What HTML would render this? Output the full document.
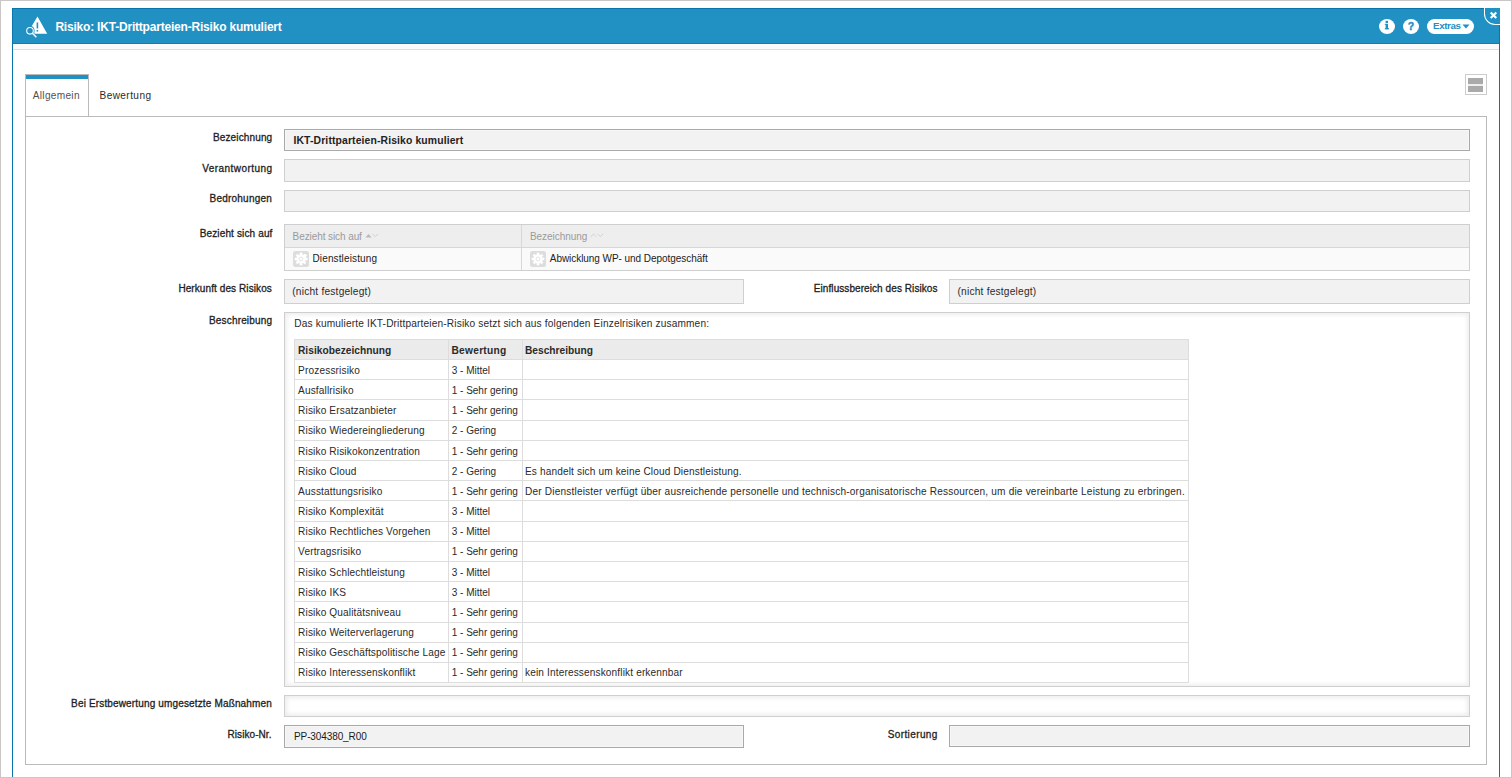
<!DOCTYPE html>
<html><head><meta charset="utf-8"><style>
html,body{margin:0;padding:0;width:1512px;height:778px;overflow:hidden;background:#fff;position:relative}
div{box-sizing:border-box}
.a{position:absolute}
.t{position:absolute;white-space:nowrap;line-height:normal;font-family:'Liberation Sans', sans-serif}
</style></head><body>
<!-- outer frame -->
<div class="a" style="left:12px;top:8px;width:1488px;height:770px;border:1px solid #0a75aa;border-bottom:none;background:#fff"></div>
<!-- header -->
<div class="a" style="left:12px;top:8px;width:1488px;height:36px;background:#2190c3;border:1px solid #0a75aa;border-bottom-color:#0e7db4"></div>
<div class="a" style="left:13px;top:45px;width:1486px;height:4px;background:#fafafa"></div>
<div class="a" style="left:13px;top:49px;width:1486px;height:1px;background:#dedede"></div>
<!-- close button -->
<div class="a" style="left:1484px;top:8px;width:16px;height:17px;background:#2190c3;border-left:1px solid #fff;border-bottom:1px solid #fff;border-bottom-left-radius:11px"></div>
<svg class="a" style="left:1489px;top:11px" width="9" height="9" viewBox="0 0 9 9"><path d="M2.5 2.3 L6.5 6.3 M6.5 2.3 L2.5 6.3" stroke="#fff" stroke-width="2.2" stroke-linecap="square"/></svg>
<!-- header icon -->
<svg class="a" style="left:24px;top:14px" width="28" height="26" viewBox="0 0 28 26">
 <path d="M13.5 2.5 L23.2 19.7 L10.5 19.7 L10 17.5 A5 5 0 0 0 7.8 12 Z" fill="#fff"/>
 <rect x="12.6" y="8.5" width="1.6" height="6" fill="#2190c3"/>
 <rect x="12.6" y="16" width="1.6" height="1.6" fill="#2190c3"/>
 <circle cx="6" cy="16.8" r="3.3" fill="none" stroke="#2190c3" stroke-width="2.6"/>
 <circle cx="6" cy="16.8" r="3.3" fill="none" stroke="#fff" stroke-width="1.1"/>
 <path d="M8.6 19.4 L12.4 23.2" stroke="#fff" stroke-width="1.4"/>
</svg>
<!-- info / help / extras -->
<div class="a" style="left:1379px;top:19px;width:16px;height:15px;border-radius:50%;background:#fff"></div>
<div class="a" style="left:1403px;top:19px;width:16px;height:15px;border-radius:50%;background:#fff"></div>
<div class="a" style="left:1427px;top:19px;width:47px;height:15px;border-radius:7.5px;background:#fff"></div>
<svg class="a" style="left:1384px;top:20px" width="6" height="10" viewBox="0 0 6 10"><rect x="1.6" y="0.8" width="2.4" height="2.2" fill="#2190c3"/><rect x="1.6" y="3.8" width="2.4" height="5.4" fill="#2190c3"/><rect x="0.8" y="3.8" width="1" height="1.1" fill="#2190c3"/><rect x="0.8" y="8.2" width="4.2" height="1.1" fill="#2190c3"/></svg>
<div class="t" style="left:1407px;top:19.5px;width:8px;text-align:center;font-size:10.5px;font-weight:700;color:#2190c3;-webkit-text-stroke:0.4px #2190c3">?</div>
<div class="t" style="left:1433px;top:20px;font-size:9.8px;font-weight:700;color:#2190c3;letter-spacing:-0.4px">Extras</div>
<svg class="a" style="left:1462px;top:24px" width="8" height="5" viewBox="0 0 8 5"><path d="M0.5 0.5 L7.5 0.5 L4 4.5 Z" fill="#2190c3"/></svg>
<!-- tabs -->
<div class="a" style="left:25px;top:74px;width:64px;height:43px;border:1px solid #bababa;border-bottom:none;background:#fff"></div>
<div class="a" style="left:26px;top:75px;width:62px;height:4px;background:#2190c3"></div>
<div class="a" style="left:25px;top:116px;width:1462px;height:649px;border:1px solid #bababa"></div>
<!-- layout icon -->
<div class="a" style="left:1465px;top:74px;width:22px;height:21px;border:1px solid #cccccc;background:#fff"></div>
<div class="a" style="left:1468px;top:78px;width:15px;height:6px;background:#aaaaaa"></div>
<div class="a" style="left:1468px;top:84px;width:15px;height:2px;background:#eeeeee"></div>
<div class="a" style="left:1468px;top:86px;width:15px;height:6px;background:#aaaaaa"></div>
<!-- fields -->
<div class="a" style="left:284px;top:129px;width:1186px;height:22px;border:1px solid #a9a9a9;background:#f2f2f2;box-shadow:inset 0 0 0 1px #f7f7f7"></div>
<div class="a" style="left:284px;top:159px;width:1186px;height:23px;border:1px solid #cfcfcf;background:#f2f2f2"></div>
<div class="a" style="left:284px;top:190px;width:1186px;height:22px;border:1px solid #cfcfcf;background:#f2f2f2"></div>
<!-- bezieht sich auf table -->
<div class="a" style="left:284px;top:224px;width:1186px;height:47px;border:1px solid #cfcfcf;background:#fafafa"></div>
<div class="a" style="left:285px;top:225px;width:1184px;height:22px;background:#eeeeee"></div>
<div class="a" style="left:285px;top:247px;width:1184px;height:1px;background:#d7d7d7"></div>
<div class="a" style="left:521px;top:225px;width:1px;height:45px;background:#d7d7d7"></div>
<svg class="a" style="left:365px;top:233px" width="14" height="6" viewBox="0 0 14 6"><path d="M0.3 4.6 L3.5 1 L6.7 4.6 Z" fill="#bbbbbb"/><path d="M7.5 0.8 L10.3 3.6 L13.1 0.8" fill="none" stroke="#cccccc" stroke-width="0.9"/></svg>
<svg class="a" style="left:590px;top:233px" width="14" height="6" viewBox="0 0 14 6"><path d="M0.7 3.8 L3.5 1 L6.3 3.8" fill="none" stroke="#cccccc" stroke-width="0.9"/><path d="M7.5 0.8 L10.3 3.6 L13.1 0.8" fill="none" stroke="#cccccc" stroke-width="0.9"/></svg>
<!-- gears -->
<svg class="a" style="left:293px;top:251px" width="16" height="16" viewBox="0 0 16 16"><rect x="0" y="0" width="16" height="16" rx="2.5" fill="#dddddd"/><g transform="translate(8,8)" fill="#fff"><path id="g" d="M-1.2 -6.2 L1.2 -6.2 L1.5 -4.3 L3.3 -3.6 L4.6 -5 L6.2 -3.4 L4.8 -2 L5.2 -0.9 L6.3 -0.9 L6.3 1.2 Z"/></g><circle cx="8" cy="8" r="4.6" fill="#fff"/><g transform="translate(8,8)" fill="#fff"><rect x="-1.3" y="-6.3" width="2.6" height="12.6"/><rect x="-6.3" y="-1.3" width="12.6" height="2.6"/><rect x="-1.3" y="-6.3" width="2.6" height="12.6" transform="rotate(45)"/><rect x="-1.3" y="-6.3" width="2.6" height="12.6" transform="rotate(-45)"/></g><circle cx="8" cy="8" r="1.9" fill="none" stroke="#e6e6e6" stroke-width="1"/></svg>
<svg class="a" style="left:530px;top:251px" width="16" height="16" viewBox="0 0 16 16"><rect x="0" y="0" width="16" height="16" rx="2.5" fill="#dddddd"/><circle cx="8" cy="8" r="4.6" fill="#fff"/><g transform="translate(8,8)" fill="#fff"><rect x="-1.3" y="-6.3" width="2.6" height="12.6"/><rect x="-6.3" y="-1.3" width="12.6" height="2.6"/><rect x="-1.3" y="-6.3" width="2.6" height="12.6" transform="rotate(45)"/><rect x="-1.3" y="-6.3" width="2.6" height="12.6" transform="rotate(-45)"/></g><circle cx="8" cy="8" r="1.9" fill="none" stroke="#e6e6e6" stroke-width="1"/></svg>
<!-- herkunft / einfluss -->
<div class="a" style="left:284px;top:279px;width:460px;height:25px;border:1px solid #cfcfcf;background:#f2f2f2"></div>
<div class="a" style="left:949px;top:279px;width:521px;height:25px;border:1px solid #cfcfcf;background:#f2f2f2"></div>
<!-- beschreibung box -->
<div class="a" style="left:284px;top:312px;width:1186px;height:375px;border:1px solid #cfcfcf;background:#fff;box-shadow:inset 0 0 4px 2px #eeeeee"></div>
<!-- inner table -->
<div class="a" style="left:294px;top:339px;width:895px;height:344px;border:1px solid #dddddd;background:#fff"></div>
<div class="a" style="left:295px;top:340px;width:893px;height:19px;background:#ebebeb"></div>
<div class="a" style="left:295px;top:359px;width:893px;height:1px;background:#dddddd"></div>
<div class="a" style="left:295px;top:379px;width:893px;height:1px;background:#dddddd"></div>
<div class="a" style="left:295px;top:399px;width:893px;height:1px;background:#dddddd"></div>
<div class="a" style="left:295px;top:420px;width:893px;height:1px;background:#dddddd"></div>
<div class="a" style="left:295px;top:440px;width:893px;height:1px;background:#dddddd"></div>
<div class="a" style="left:295px;top:460px;width:893px;height:1px;background:#dddddd"></div>
<div class="a" style="left:295px;top:480px;width:893px;height:1px;background:#dddddd"></div>
<div class="a" style="left:295px;top:500px;width:893px;height:1px;background:#dddddd"></div>
<div class="a" style="left:295px;top:521px;width:893px;height:1px;background:#dddddd"></div>
<div class="a" style="left:295px;top:541px;width:893px;height:1px;background:#dddddd"></div>
<div class="a" style="left:295px;top:561px;width:893px;height:1px;background:#dddddd"></div>
<div class="a" style="left:295px;top:581px;width:893px;height:1px;background:#dddddd"></div>
<div class="a" style="left:295px;top:601px;width:893px;height:1px;background:#dddddd"></div>
<div class="a" style="left:295px;top:622px;width:893px;height:1px;background:#dddddd"></div>
<div class="a" style="left:295px;top:642px;width:893px;height:1px;background:#dddddd"></div>
<div class="a" style="left:295px;top:662px;width:893px;height:1px;background:#dddddd"></div>
<div class="a" style="left:448px;top:340px;width:1px;height:342px;background:#dddddd"></div>
<div class="a" style="left:522px;top:340px;width:1px;height:342px;background:#dddddd"></div>
<!-- bei erstbewertung -->
<div class="a" style="left:284px;top:695px;width:1186px;height:22px;border:1px solid #cfcfcf;background:#fff;box-shadow:inset 0 0 4px 2px #ececec"></div>
<!-- risiko-nr / sortierung -->
<div class="a" style="left:284px;top:725px;width:460px;height:23px;border:1px solid #a9a9a9;background:#f2f2f2;box-shadow:inset 0 0 0 1px #f7f7f7"></div>
<div class="a" style="left:949px;top:725px;width:521px;height:22px;border:1px solid #a9a9a9;background:#f2f2f2;box-shadow:inset 0 0 0 1px #f7f7f7"></div>
<!-- outer screenshot frame -->
<div class="a" style="left:0;top:0;width:1512px;height:778px;border:1px solid #cac6c6;z-index:5"></div>

<div class="t" style="left:55.40px;top:20.00px;font-size:12px;font-weight:700;color:#ffffff;letter-spacing:-0.202px">Risiko: IKT-Drittparteien-Risiko kumuliert</div>
<div class="t" style="left:32.80px;top:90.00px;font-size:10.09px;font-weight:400;color:#505050;letter-spacing:0.305px">Allgemein</div>
<div class="t" style="left:99.50px;top:90.00px;font-size:10.09px;font-weight:400;color:#2a2a2a;letter-spacing:0.415px">Bewertung</div>
<div class="t" style="left:212.90px;top:132.00px;font-size:10.0px;font-weight:400;color:#1e1e1e;letter-spacing:0.147px;-webkit-text-stroke:0.3px #1e1e1e">Bezeichnung</div>
<div class="t" style="left:202.30px;top:163.00px;font-size:10.0px;font-weight:400;color:#1e1e1e;letter-spacing:0.433px;-webkit-text-stroke:0.3px #1e1e1e">Verantwortung</div>
<div class="t" style="left:209.60px;top:193.00px;font-size:10.0px;font-weight:400;color:#1e1e1e;letter-spacing:0.214px;-webkit-text-stroke:0.3px #1e1e1e">Bedrohungen</div>
<div class="t" style="left:199.70px;top:228.00px;font-size:10.0px;font-weight:400;color:#1e1e1e;letter-spacing:0.139px;-webkit-text-stroke:0.3px #1e1e1e">Bezieht sich auf</div>
<div class="t" style="left:178.40px;top:283.00px;font-size:10.0px;font-weight:400;color:#1e1e1e;letter-spacing:0.089px;-webkit-text-stroke:0.3px #1e1e1e">Herkunft des Risikos</div>
<div class="t" style="left:813.80px;top:283.00px;font-size:10.0px;font-weight:400;color:#1e1e1e;letter-spacing:0.076px;-webkit-text-stroke:0.3px #1e1e1e">Einflussbereich des Risikos</div>
<div class="t" style="left:209.00px;top:315.00px;font-size:10.0px;font-weight:400;color:#1e1e1e;letter-spacing:0.168px;-webkit-text-stroke:0.3px #1e1e1e">Beschreibung</div>
<div class="t" style="left:71.10px;top:698.00px;font-size:10.0px;font-weight:400;color:#1e1e1e;letter-spacing:0.151px;-webkit-text-stroke:0.3px #1e1e1e">Bei Erstbewertung umgesetzte Maßnahmen</div>
<div class="t" style="left:227.50px;top:729.00px;font-size:10.0px;font-weight:400;color:#1e1e1e;letter-spacing:0.073px;-webkit-text-stroke:0.3px #1e1e1e">Risiko-Nr.</div>
<div class="t" style="left:887.70px;top:729.00px;font-size:10.0px;font-weight:400;color:#1e1e1e;letter-spacing:0.395px;-webkit-text-stroke:0.3px #1e1e1e">Sortierung</div>
<div class="t" style="left:293.48px;top:135.00px;font-size:10.4px;font-weight:700;color:#222222;letter-spacing:0.122px">IKT-Drittparteien-Risiko kumuliert</div>
<div class="t" style="left:292.60px;top:231.00px;font-size:9.99px;font-weight:400;color:#9a9a9a;letter-spacing:-0.080px">Bezieht sich auf</div>
<div class="t" style="left:530.00px;top:231.00px;font-size:9.99px;font-weight:400;color:#9a9a9a;letter-spacing:-0.054px">Bezeichnung</div>
<div class="t" style="left:312.50px;top:253.00px;font-size:9.99px;font-weight:400;color:#222222;letter-spacing:0.137px">Dienstleistung</div>
<div class="t" style="left:549.80px;top:253.00px;font-size:9.99px;font-weight:400;color:#222222;letter-spacing:-0.045px">Abwicklung WP- und Depotgeschäft</div>
<div class="t" style="left:292.29px;top:286.00px;font-size:10.19px;font-weight:400;color:#2a2a2a;letter-spacing:0.206px">(nicht festgelegt)</div>
<div class="t" style="left:957.49px;top:286.00px;font-size:10.19px;font-weight:400;color:#2a2a2a;letter-spacing:0.206px">(nicht festgelegt)</div>
<div class="t" style="left:294.00px;top:731.00px;font-size:10.0px;font-weight:400;color:#1a1a1a;letter-spacing:-0.104px">PP-304380_R00</div>
<div class="t" style="left:294.29px;top:318.00px;font-size:10.14px;font-weight:400;color:#2a2a2a;letter-spacing:0.155px">Das kumulierte IKT-Drittparteien-Risiko setzt sich aus folgenden Einzelrisiken zusammen:</div>
<div class="t" style="left:297.99px;top:345.00px;font-size:10.2px;font-weight:700;color:#2a2a2a;letter-spacing:0.023px">Risikobezeichnung</div>
<div class="t" style="left:451.49px;top:345.00px;font-size:10.2px;font-weight:700;color:#2a2a2a;letter-spacing:0.259px">Bewertung</div>
<div class="t" style="left:524.99px;top:345.00px;font-size:10.2px;font-weight:700;color:#2a2a2a;letter-spacing:0.000px">Beschreibung</div>
<div class="t" style="left:298.10px;top:365.00px;font-size:10.09px;font-weight:400;color:#2a2a2a;letter-spacing:0.153px">Prozessrisiko</div>
<div class="t" style="left:451.70px;top:365.00px;font-size:10.0px;font-weight:400;color:#2a2a2a;letter-spacing:0.000px">3 - Mittel</div>
<div class="t" style="left:298.10px;top:385.00px;font-size:10.09px;font-weight:400;color:#2a2a2a;letter-spacing:0.137px">Ausfallrisiko</div>
<div class="t" style="left:451.70px;top:385.00px;font-size:10.0px;font-weight:400;color:#2a2a2a;letter-spacing:0.000px">1 - Sehr gering</div>
<div class="t" style="left:298.10px;top:405.00px;font-size:10.09px;font-weight:400;color:#2a2a2a;letter-spacing:0.146px">Risiko Ersatzanbieter</div>
<div class="t" style="left:451.70px;top:405.00px;font-size:10.0px;font-weight:400;color:#2a2a2a;letter-spacing:0.000px">1 - Sehr gering</div>
<div class="t" style="left:298.10px;top:425.00px;font-size:10.09px;font-weight:400;color:#2a2a2a;letter-spacing:0.151px">Risiko Wiedereingliederung</div>
<div class="t" style="left:451.70px;top:425.00px;font-size:10.0px;font-weight:400;color:#2a2a2a;letter-spacing:0.000px">2 - Gering</div>
<div class="t" style="left:298.10px;top:446.00px;font-size:10.09px;font-weight:400;color:#2a2a2a;letter-spacing:0.145px">Risiko Risikokonzentration</div>
<div class="t" style="left:451.70px;top:446.00px;font-size:10.0px;font-weight:400;color:#2a2a2a;letter-spacing:0.000px">1 - Sehr gering</div>
<div class="t" style="left:298.10px;top:466.00px;font-size:10.09px;font-weight:400;color:#2a2a2a;letter-spacing:0.157px">Risiko Cloud</div>
<div class="t" style="left:451.70px;top:466.00px;font-size:10.0px;font-weight:400;color:#2a2a2a;letter-spacing:0.000px">2 - Gering</div>
<div class="t" style="left:525.00px;top:466.00px;font-size:10.09px;font-weight:400;color:#2a2a2a;letter-spacing:0.144px">Es handelt sich um keine Cloud Dienstleistung.</div>
<div class="t" style="left:298.10px;top:486.00px;font-size:10.09px;font-weight:400;color:#2a2a2a;letter-spacing:0.148px">Ausstattungsrisiko</div>
<div class="t" style="left:451.70px;top:486.00px;font-size:10.0px;font-weight:400;color:#2a2a2a;letter-spacing:0.000px">1 - Sehr gering</div>
<div class="t" style="left:525.00px;top:486.00px;font-size:10.09px;font-weight:400;color:#2a2a2a;letter-spacing:0.185px">Der Dienstleister verfügt über ausreichende personelle und technisch-organisatorische Ressourcen, um die vereinbarte Leistung zu erbringen.</div>
<div class="t" style="left:298.10px;top:506.00px;font-size:10.09px;font-weight:400;color:#2a2a2a;letter-spacing:0.150px">Risiko Komplexität</div>
<div class="t" style="left:451.70px;top:506.00px;font-size:10.0px;font-weight:400;color:#2a2a2a;letter-spacing:0.000px">3 - Mittel</div>
<div class="t" style="left:298.10px;top:526.00px;font-size:10.09px;font-weight:400;color:#2a2a2a;letter-spacing:0.152px">Risiko Rechtliches Vorgehen</div>
<div class="t" style="left:451.70px;top:526.00px;font-size:10.0px;font-weight:400;color:#2a2a2a;letter-spacing:0.000px">3 - Mittel</div>
<div class="t" style="left:298.10px;top:546.00px;font-size:10.09px;font-weight:400;color:#2a2a2a;letter-spacing:0.144px">Vertragsrisiko</div>
<div class="t" style="left:451.70px;top:546.00px;font-size:10.0px;font-weight:400;color:#2a2a2a;letter-spacing:0.000px">1 - Sehr gering</div>
<div class="t" style="left:298.10px;top:567.00px;font-size:10.09px;font-weight:400;color:#2a2a2a;letter-spacing:0.145px">Risiko Schlechtleistung</div>
<div class="t" style="left:451.70px;top:567.00px;font-size:10.0px;font-weight:400;color:#2a2a2a;letter-spacing:0.000px">3 - Mittel</div>
<div class="t" style="left:298.10px;top:587.00px;font-size:10.09px;font-weight:400;color:#2a2a2a;letter-spacing:0.157px">Risiko IKS</div>
<div class="t" style="left:451.70px;top:587.00px;font-size:10.0px;font-weight:400;color:#2a2a2a;letter-spacing:0.000px">3 - Mittel</div>
<div class="t" style="left:298.10px;top:607.00px;font-size:10.09px;font-weight:400;color:#2a2a2a;letter-spacing:0.146px">Risiko Qualitätsniveau</div>
<div class="t" style="left:451.70px;top:607.00px;font-size:10.0px;font-weight:400;color:#2a2a2a;letter-spacing:0.000px">1 - Sehr gering</div>
<div class="t" style="left:298.10px;top:627.00px;font-size:10.09px;font-weight:400;color:#2a2a2a;letter-spacing:0.150px">Risiko Weiterverlagerung</div>
<div class="t" style="left:451.70px;top:627.00px;font-size:10.0px;font-weight:400;color:#2a2a2a;letter-spacing:0.000px">1 - Sehr gering</div>
<div class="t" style="left:298.10px;top:647.00px;font-size:10.09px;font-weight:400;color:#2a2a2a;letter-spacing:0.147px">Risiko Geschäftspolitische Lage</div>
<div class="t" style="left:451.70px;top:647.00px;font-size:10.0px;font-weight:400;color:#2a2a2a;letter-spacing:0.000px">1 - Sehr gering</div>
<div class="t" style="left:298.10px;top:667.00px;font-size:10.09px;font-weight:400;color:#2a2a2a;letter-spacing:0.140px">Risiko Interessenskonflikt</div>
<div class="t" style="left:451.70px;top:667.00px;font-size:10.0px;font-weight:400;color:#2a2a2a;letter-spacing:0.000px">1 - Sehr gering</div>
<div class="t" style="left:525.00px;top:667.00px;font-size:10.09px;font-weight:400;color:#2a2a2a;letter-spacing:0.143px">kein Interessenskonflikt erkennbar</div>
</body></html>
